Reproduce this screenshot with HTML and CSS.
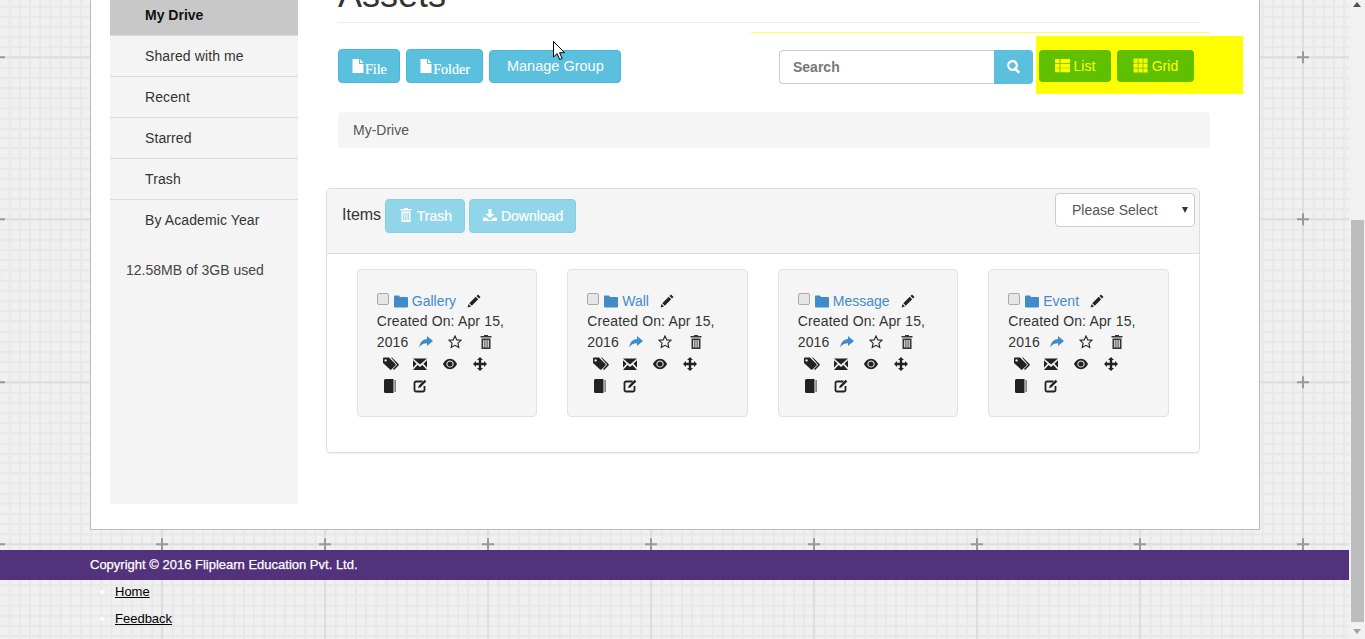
FILE: index.html
```html
<!DOCTYPE html>
<html lang="en">
<head>
    <meta charset="UTF-8">
    <meta name="viewport" content="width=device-width, initial-scale=1.0">
    <title>Assets</title>
    <link rel="stylesheet" href="styles.css">
</head>
<body>
    <svg class="sprite" xmlns="http://www.w3.org/2000/svg">
        <symbol id="i-file" viewBox="0 0 14 14"><path d="M1.500 0h6.500v5h4.500v9h-11z"/><path d="M9 0l3.500 4H9z"/></symbol>
        <symbol id="i-folder" viewBox="0 0 14 14"><path d="M0 2.500a1 1 0 0 1 1-1h4l1 1.500h7a1 1 0 0 1 1 1V12.500a1 1 0 0 1-1 1H1a1 1 0 0 1-1-1z"/></symbol>
        <symbol id="i-pencil" viewBox="0 0 14 14"><path d="M11 .5L13.500 3 12 4.500 9.500 2z"/><path d="M8.700 2.800l2.500 2.500L4.800 11.700 2.300 9.200z"/><path d="M1.600 10l2.400 2.400-3.400 1z"/></symbol>
        <symbol id="i-share" viewBox="0 0 14 14"><path d="M8 1l6 5-6 5V8.200C4.500 8.200 2 9.200.3 12.500.6 7.800 3.500 4.300 8 4z"/></symbol>
        <symbol id="i-star" viewBox="0 0 14 14"><path fill="none" stroke="currentColor" stroke-width="1.100" d="M7 1l1.800 3.900 4.200.4-3.100 2.900.9 4.200L7 10.300l-3.800 2.100.9-4.200L1 5.300l4.200-.4z"/></symbol>
        <symbol id="i-trash" viewBox="0 0 14 14"><path d="M5 0h4v1h3.500v1.500h-11V1H5z"/><path fill-rule="evenodd" d="M2.500 3.500h9V14h-9zM4.200 5v7.500h1.200V5zM6.400 5v7.500h1.200V5zM8.600 5v7.500h1.200V5z"/></symbol>
        <symbol id="i-tags" viewBox="0 0 16 14"><path fill-rule="evenodd" d="M0 1.500a1 1 0 0 1 1-1h5l6.500 6.500a1 1 0 0 1 0 1.400L8.400 12.500a1 1 0 0 1-1.400 0L0 6zM2.600 2.200a1.200 1.200 0 1 0 .01 0z"/><path d="M8 .5h1l6.500 6.500a1 1 0 0 1 0 1.400l-4.500 4.600-1-1 4.100-4.200z"/></symbol>
        <symbol id="i-envelope" viewBox="0 0 14 14"><path d="M0 1.500h14L7 7.600z"/><path d="M0 13l4.600-4.900L7 10l2.400-1.900 4.600 4.900z"/><path d="M0 3.300l3.600 3.400L0 10.500zM14 3.300l-3.600 3.400 3.600 3.800z"/></symbol>
        <symbol id="i-eye" viewBox="0 0 14 14"><path fill-rule="evenodd" d="M7 1.800c3.400 0 5.900 2.800 7 5.200-1.100 2.400-3.600 5.200-7 5.200S1.100 9.400 0 7c1.100-2.400 3.600-5.200 7-5.200zM7 3.400a3.600 3.600 0 1 0 .01 0z"/><circle cx="7" cy="7" r="2.600"/></symbol>
        <symbol id="i-move" viewBox="0 0 14 14"><path d="M7 0l3 3H8.200v2.800H11V4l3 3-3 3V8.200H8.200V11H10l-3 3-3-3h1.800V8.200H3V10L0 7l3-3v1.800h2.800V3H4z"/></symbol>
        <symbol id="i-book" viewBox="0 0 14 14"><path d="M2.500 0h8v14h-8a1.500 1.500 0 0 1-1.500-1.500v-11A1.500 1.500 0 0 1 2.500 0z"/><path fill="#888" d="M11.300 1H13v12h-1.700z"/></symbol>
        <symbol id="i-edit" viewBox="0 0 14 14"><path fill="none" stroke="currentColor" stroke-width="1.800" d="M9.500 2.500H3a1.500 1.500 0 0 0-1.500 1.500v7A1.500 1.500 0 0 0 3 12.500h7a1.500 1.500 0 0 0 1.500-1.500V7"/><path d="M11.700.8l1.600 1.600-6 6-2.200.6.600-2.200z"/></symbol>
        <symbol id="i-list" viewBox="0 0 14 14"><path d="M0 1h4.200v3.700H0zM5 1h9v3.700H5zM0 5.300h4.200V9H0zM5 5.300h9V9H5zM0 9.600h4.200v3.700H0zM5 9.600h9v3.700H5z"/></symbol>
        <symbol id="i-grid" viewBox="0 0 14 14"><path d="M.5.500h3.900v3.900H.5zM5.100.500H9v3.900H5.100zM9.700.500h3.900v3.900H9.700zM.5 5.100h3.900V9H.5zM5.100 5.100H9V9H5.100zM9.700 5.100h3.900V9H9.700zM.5 9.700h3.900v3.900H.5zM5.100 9.700H9v3.900H5.100zM9.700 9.700h3.900v3.900H9.700z"/></symbol>
        <symbol id="i-search" viewBox="0 0 14 14"><path fill-rule="evenodd" d="M6 .8a5.200 5.200 0 0 1 4.200 8.200l3 3-1.700 1.700-3-3A5.200 5.200 0 1 1 6 .8zM6 3a3 3 0 1 0 .01 0z"/></symbol>
        <symbol id="i-download" viewBox="0 0 14 14"><path d="M5.500 1h3v5h3L7 10.300 2.500 6h3z"/><path d="M0 9.500h3.200L7 12.500l3.800-3H14V13H0z"/></symbol>
    </svg>

    <div class="screen">
        <div class="viewport">
            <div class="container">
                <div class="sidebar">
                    <a class="side-link active">My Drive</a>
                    <a class="side-link">Shared with me</a>
                    <a class="side-link">Recent</a>
                    <a class="side-link">Starred</a>
                    <a class="side-link">Trash</a>
                    <a class="side-link plain">By Academic Year</a>
                    <p class="usage">12.58MB of 3GB used</p>
                </div>
                <div class="main">
                    <h1 class="title">Assets</h1>
                    <div class="toolbar">
                        <div class="actions">
                            <button class="btn btn-serif"><svg class="ico"><use href="#i-file"/></svg>File</button>
                            <button class="btn btn-serif"><svg class="ico"><use href="#i-file"/></svg>Folder</button>
                            <button class="btn btn-group">Manage Group</button>
                        </div>
                        <div class="tools">
                            <div class="search">
                                <input class="search-input" type="text" placeholder="Search">
                                <button class="search-btn"><svg class="ico"><use href="#i-search"/></svg></button>
                            </div>
                            <div class="views">
                                <button class="btn-view"><svg class="ico"><use href="#i-list"/></svg> List</button>
                                <button class="btn-view"><svg class="ico"><use href="#i-grid"/></svg> Grid</button>
                            </div>
                        </div>
                    </div>
                    <div class="crumb">My-Drive</div>
                    <div class="panel">
                        <div class="panel-head">
                            <span class="panel-title">Items</span>
                            <button class="btn btn-off"><svg class="ico"><use href="#i-trash"/></svg> Trash</button>
                            <button class="btn btn-off"><svg class="ico"><use href="#i-download"/></svg> Download</button>
                            <div class="select-wrap">
                                <select class="select"><option>Please Select</option></select>
                            </div>
                        </div>
                        <div class="items">
                            <div class="card">
                                <div class="card-name"><input class="check" type="checkbox"><svg class="ico blue"><use href="#i-folder"/></svg><a>Gallery</a><svg class="ico pen"><use href="#i-pencil"/></svg></div>
                                <div class="card-line">Created On: Apr 15,</div>
                                <div class="card-line">2016<svg class="ico blue share"><use href="#i-share"/></svg><svg class="ico star"><use href="#i-star"/></svg><svg class="ico bin"><use href="#i-trash"/></svg></div>
                                <div class="card-icons first"><svg class="ico tag"><use href="#i-tags"/></svg><svg class="ico"><use href="#i-envelope"/></svg><svg class="ico"><use href="#i-eye"/></svg><svg class="ico"><use href="#i-move"/></svg></div>
                                <div class="card-icons"><svg class="ico"><use href="#i-book"/></svg><svg class="ico"><use href="#i-edit"/></svg></div>
                            </div>
                            <div class="card">
                                <div class="card-name"><input class="check" type="checkbox"><svg class="ico blue"><use href="#i-folder"/></svg><a>Wall</a><svg class="ico pen"><use href="#i-pencil"/></svg></div>
                                <div class="card-line">Created On: Apr 15,</div>
                                <div class="card-line">2016<svg class="ico blue share"><use href="#i-share"/></svg><svg class="ico star"><use href="#i-star"/></svg><svg class="ico bin"><use href="#i-trash"/></svg></div>
                                <div class="card-icons first"><svg class="ico tag"><use href="#i-tags"/></svg><svg class="ico"><use href="#i-envelope"/></svg><svg class="ico"><use href="#i-eye"/></svg><svg class="ico"><use href="#i-move"/></svg></div>
                                <div class="card-icons"><svg class="ico"><use href="#i-book"/></svg><svg class="ico"><use href="#i-edit"/></svg></div>
                            </div>
                            <div class="card">
                                <div class="card-name"><input class="check" type="checkbox"><svg class="ico blue"><use href="#i-folder"/></svg><a>Message</a><svg class="ico pen"><use href="#i-pencil"/></svg></div>
                                <div class="card-line">Created On: Apr 15,</div>
                                <div class="card-line">2016<svg class="ico blue share"><use href="#i-share"/></svg><svg class="ico star"><use href="#i-star"/></svg><svg class="ico bin"><use href="#i-trash"/></svg></div>
                                <div class="card-icons first"><svg class="ico tag"><use href="#i-tags"/></svg><svg class="ico"><use href="#i-envelope"/></svg><svg class="ico"><use href="#i-eye"/></svg><svg class="ico"><use href="#i-move"/></svg></div>
                                <div class="card-icons"><svg class="ico"><use href="#i-book"/></svg><svg class="ico"><use href="#i-edit"/></svg></div>
                            </div>
                            <div class="card">
                                <div class="card-name"><input class="check" type="checkbox"><svg class="ico blue"><use href="#i-folder"/></svg><a>Event</a><svg class="ico pen"><use href="#i-pencil"/></svg></div>
                                <div class="card-line">Created On: Apr 15,</div>
                                <div class="card-line">2016<svg class="ico blue share"><use href="#i-share"/></svg><svg class="ico star"><use href="#i-star"/></svg><svg class="ico bin"><use href="#i-trash"/></svg></div>
                                <div class="card-icons first"><svg class="ico tag"><use href="#i-tags"/></svg><svg class="ico"><use href="#i-envelope"/></svg><svg class="ico"><use href="#i-eye"/></svg><svg class="ico"><use href="#i-move"/></svg></div>
                                <div class="card-icons"><svg class="ico"><use href="#i-book"/></svg><svg class="ico"><use href="#i-edit"/></svg></div>
                            </div>
                        </div>
                    </div>
                </div>
            </div>
            <div class="footer">Copyright © 2016 Fliplearn Education Pvt. Ltd.</div>
            <ul class="foot-links">
                <li><a>Home</a></li>
                <li><a>Feedback</a></li>
            </ul>
        </div>
        <div class="scrollbar">
            <span class="arrow-up"></span>
            <span class="thumb"></span>
            <span class="arrow-down"></span>
        </div>
    </div>

    <svg class="cursor" viewBox="0 0 12 20"><path d="M.5.500v15.500l3.700-3.400 2.400 5.900 2.500-1-2.500-5.800h5z" fill="#fff" stroke="#000"/></svg>
</body>
</html>
```

FILE: styles.css
```css
* {
    box-sizing: border-box;
}
html, body {
    margin: 0;
    height: 639px;
    overflow: hidden;
}
body {
    position: relative;
    color: #333;
    font-family: "Liberation Sans", Arial, sans-serif;
    font-size: 14px;
    background-color: #f0f0f0;
    background-image: url("data:image/svg+xml,%3Csvg xmlns='http://www.w3.org/2000/svg' width='163' height='162.500'%3E%3Cdefs%3E%3Cpattern id='p' width='10.188' height='10.156' patternUnits='userSpaceOnUse'%3E%3Cpath d='M0 0h2v10.200H0zM0 0h10.200v2H0z' fill='%23e8e8e8'/%3E%3C/pattern%3E%3C/defs%3E%3Crect width='163' height='162.500' fill='url(%23p)'/%3E%3Cpath d='M81 0h2v162.500h-2zM0 81h163v2H0z' fill='%23dedede'/%3E%3Cpath d='M76 81h12v2H76zM81 76h2v12h-2z' fill='%23999'/%3E%3C/svg%3E");
    background-position: 80px -25px;
}
button, input, select {
    font-family: inherit;
    font-size: 14px;
}
.sprite {
    position: absolute;
    width: 0;
    height: 0;
}
.ico {
    width: 14px;
    height: 14px;
    fill: currentColor;
    color: inherit;
    vertical-align: -2px;
}
.blue {
    color: #428bca;
}
.screen {
    display: flex;
    height: 639px;
}
.viewport {
    flex: 1;
    min-width: 0;
}
.scrollbar {
    position: relative;
    flex: 0 0 16px;
    background: #f1f1f1;
}
.thumb {
    position: absolute;
    top: 220px;
    left: 2px;
    width: 13px;
    height: 402px;
    background: #bdbdbd;
}
.arrow-up, .arrow-down {
    position: absolute;
    left: 4px;
    border-left: 4px solid transparent;
    border-right: 4px solid transparent;
}
.arrow-up {
    top: 2px;
    border-bottom: 5px solid #505050;
}
.arrow-down {
    bottom: 5px;
    border-top: 5px solid #a3a3a3;
}
.container {
    display: flex;
    width: 1170px;
    height: 530px;
    margin-left: 90px;
    padding-left: 19px;
    background: #fff;
    border: 1px solid #bbb;
    border-top: 0;
    overflow: hidden;
}
.sidebar {
    flex: 0 0 188px;
    height: 504px;
    background: #f4f4f4;
}
.side-link {
    display: block;
    height: 41px;
    padding: 11px 0 0 35px;
    line-height: 18px;
    letter-spacing: .1px;
    border-bottom: 1px solid #ddd;
}
.side-link.active {
    height: 36px;
    padding-top: 6px;
    font-weight: bold;
    letter-spacing: 0;
    color: #111;
    background: #c8c8c8;
}
.side-link.plain {
    border-bottom: 0;
}
.usage {
    margin: 19px 0 0 16px;
    line-height: 20px;
    color: #444;
}
.main {
    flex: 0 0 874px;
    margin-left: 28px;
}
.title {
    width: 862px;
    height: 36px;
    margin: -13px 0 0 12px;
    font-size: 36px;
    font-weight: normal;
    line-height: 16px;
    border-bottom: 1px solid #eee;
}
.toolbar {
    display: flex;
    justify-content: space-between;
    width: 872px;
    height: 89px;
    margin-left: 12px;
    padding-top: 9px;
}
.actions {
    display: flex;
    gap: 6px;
    height: 34px;
    margin-top: 17px;
}
.btn {
    height: 34px;
    padding: 0 13px;
    color: #fff;
    background: #5bc0de;
    border: 1px solid #46b8da;
    border-radius: 4px;
}
.btn-serif {
    padding: 4px 12px 0;
    font-family: "Liberation Serif", "Times New Roman", serif;
    -webkit-text-stroke: .2px #fff;
}
.btn-serif + .btn-serif {
    padding: 4px 12.5px 0;
}
.btn-serif .ico {
    vertical-align: 1px;
}
.btn-group {
    width: 132px;
    height: 33px;
    margin-top: 1px;
    padding: 0 0 1px;
    font-size: 14.5px;
}
.tools {
    display: flex;
    width: 459px;
    height: 62px;
    padding-left: 28px;
    border-top: 1px solid #ffff5a;
}
.search {
    display: flex;
    width: 254px;
    height: 34px;
    margin-top: 17px;
}
.search-input {
    flex: 1;
    min-width: 0;
    padding: 0 13px;
    font-weight: bold;
    background: #fff;
    border: 1px solid #ccc;
    border-right: 0;
    border-radius: 4px 0 0 4px;
}
.search-input::placeholder {
    color: #777;
}
.search-btn {
    width: 39px;
    padding: 0;
    color: #fff;
    background: #5bc0de;
    border: 0;
    border-radius: 0 4px 4px 0;
}
.search-btn .ico {
    width: 15px;
    height: 15px;
}
.views {
    display: flex;
    flex: 0 0 207px;
    gap: 6px;
    height: 58px;
    margin: 3px 0 0 3px;
    padding: 14px 0 0 3px;
    background: #ff0;
}
.btn-view {
    width: 72px;
    height: 32px;
    padding: 0;
    color: #ff0;
    background: #5fc000;
    border: 0;
    border-radius: 4px;
}
.btn-view + .btn-view {
    width: 77px;
}
.btn-view .ico {
    width: 15px;
    height: 15px;
}
.crumb {
    width: 872px;
    height: 36px;
    margin-left: 12px;
    padding: 8px 15px;
    line-height: 20px;
    color: #555;
    background: #f5f5f5;
    border-radius: 4px;
}
.panel {
    width: 874px;
    margin-top: 40px;
    border: 1px solid #ddd;
    border-radius: 4px;
    box-shadow: 0 1px 1px rgba(0, 0, 0, .05);
}
.panel-head {
    position: relative;
    display: flex;
    align-items: flex-start;
    gap: 4px;
    height: 65px;
    padding: 10px 15px;
    background: #f5f5f5;
    border-bottom: 1px solid #ddd;
}
.panel-title {
    font-size: 16px;
    line-height: 32px;
}
.btn-off {
    padding: 0 12px 2px 13px;
    background: #91d5e8;
    border-color: #85cfe5;
    -webkit-text-stroke: .2px #fff;
}
.btn-off .ico {
    height: 16px;
    vertical-align: -2px;
}
.select-wrap {
    position: absolute;
    top: 4px;
    right: 4px;
}
.select-wrap::after {
    content: "";
    position: absolute;
    top: 14px;
    right: 7px;
    border-left: 3px solid transparent;
    border-right: 3px solid transparent;
    border-top: 6px solid #333;
}
.select {
    display: block;
    width: 140px;
    height: 34px;
    padding: 0 12px 0 16px;
    color: #555;
    background: #fff;
    border: 1px solid #ccc;
    border-radius: 4px;
    appearance: none;
}
.items {
    display: grid;
    grid-template-columns: repeat(4, 1fr);
    padding: 15px 15.25px 35px 14.75px;
}
.card {
    height: 148px;
    margin: 0 15px;
    padding: 20px 19px 0;
    background: #f5f5f5;
    border: 1px solid #e3e3e3;
    border-radius: 4px;
}
.card-name, .card-line, .card-icons {
    display: flex;
    align-items: center;
    height: 21px;
    white-space: nowrap;
}
.card-name {
    height: 20px;
    padding-top: 2px;
}
.card-line {
    letter-spacing: .15px;
}
.card-icons {
    height: 22px;
    gap: 16px;
    padding-left: 6px;
}
.card-icons.first {
    margin-top: 1px;
}
.card-name a {
    margin-left: 4px;
    color: #428bca;
}
.check {
    width: 12px;
    height: 12px;
    margin: -5px 5px 0 0;
    background: #e6e6e6;
    border: 1px solid #aaa;
    border-radius: 2px;
    appearance: none;
}
.pen {
    margin-left: 11px;
    color: #222;
}
.share {
    margin-left: 10px;
}
.star {
    margin-left: 15px;
    color: #222;
}
.bin {
    margin-left: 17px;
    color: #333;
}
.card-icons .ico {
    color: #222;
}
.card-icons .tag {
    width: 16px;
    margin-right: -2px;
}
.footer {
    height: 30px;
    margin-top: 20px;
    padding-left: 90px;
    font-size: 13px;
    line-height: 29px;
    color: #fff;
    background: #52327a;
    -webkit-text-stroke: .25px #fff;
}
.foot-links {
    margin: 0;
    padding: 0 0 0 115px;
    font-size: 13px;
    color: #fff;
}
.foot-links li {
    height: 27px;
    line-height: 24px;
}
.foot-links a {
    color: #000;
    text-decoration: underline;
}
.cursor {
    position: absolute;
    top: 41px;
    left: 553px;
    width: 12px;
    height: 20px;
}
```
